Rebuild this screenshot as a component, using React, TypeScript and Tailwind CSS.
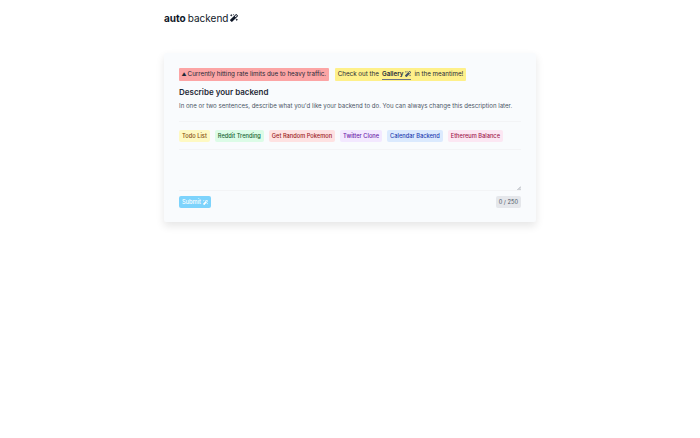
import { FaMagic } from 'react-icons/fa';

const examples = [
  { label: 'Todo List', color: 'bg-[#fef9c3] text-[#854d0e]' },
  { label: 'Reddit Trending', color: 'bg-[#dcfce7] text-[#166534]' },
  { label: 'Get Random Pokemon', color: 'bg-[#fee2e2] text-[#991b1b]' },
  { label: 'Twitter Clone', color: 'bg-[#f3e8ff] text-[#6b21a8]' },
  { label: 'Calendar Backend', color: 'bg-[#dbeafe] text-[#1e40af]' },
  { label: 'Ethereum Balance', color: 'bg-[#fce7f3] text-[#9d174d]' },
];

export default function App() {
  return (
    <div className="min-h-[438px] bg-white font-['Inter',sans-serif] text-gray-900">
      <div className="mx-auto w-[372px]">
        {/* Logo */}
        <div className="flex h-[53px] items-start pt-[11px] text-[10px] leading-[14px]">
          <span className="font-bold">auto</span>
          <span className="ml-[2px]">backend</span>
          <FaMagic className="ml-[2px] mt-[3px] h-[8px] w-[8px]" />
        </div>

        {/* Card */}
        <div className="h-[169px] rounded-[2px] bg-[#f9fbfd] px-[15px] pt-[15px] shadow-[0_4px_8px_rgba(0,0,0,0.1)]">
          <div className="flex gap-[6px] text-[6.25px] leading-[13px] text-[#1f2937]">
            <div className="flex items-center gap-[1px] rounded-[1px] bg-[#fca5a5] px-[2.5px]">
              <span className="text-[5px]">▲</span>
              <span>Currently hitting rate limits due to heavy traffic.</span>
            </div>
            <div className="flex items-center rounded-[1px] bg-[#fef08a] px-[3px]">
              <span>Check out the</span>
              <span className="ml-[3px] flex items-center gap-[2px] border-b border-gray-500 font-semibold leading-[9px]">
                Gallery
                <FaMagic className="h-[6px] w-[6px] text-gray-600" />
              </span>
              <span className="ml-[3px]">in the meantime!</span>
            </div>
          </div>

          <h2 className="mt-[4px] text-[8px] font-semibold leading-[14px] text-[#1f2937]">Describe your backend</h2>
          <p className="mt-[1px] whitespace-nowrap text-[6.1px] leading-[11px] text-gray-600">
            In one or two sentences, describe what you'd like your backend to do. You can always change this description later.
          </p>

          <div className="mt-[10px] flex gap-[5px] border-y border-gray-100 py-[7.5px]">
            {examples.map(ex => (
              <span key={ex.label} className={`rounded-[2px] px-[3px] text-[5.7px] font-medium leading-[12px] ${ex.color}`}>
                {ex.label}
              </span>
            ))}
          </div>

          {/* Textarea, the drag handle sits over its corner */}
          <div className="relative">
            <textarea
              className="block h-[41px] w-full resize-none border-b border-gray-100 bg-transparent outline-none"
              defaultValue=""
            />
            <svg className="absolute bottom-[1px] right-[0px] h-[4px] w-[4px]" viewBox="0 0 4 4">
              <path d="M0.5 4L4 0.5M2.5 4L4 2.5" stroke="#6b7280" strokeWidth="0.6" fill="none" />
            </svg>
          </div>

          <div className="mt-[5px] flex items-center justify-between">
            <button className="flex h-[12px] items-center gap-[2px] rounded-[2px] bg-[#7dd3fc] px-[3px] text-[5.7px] font-medium text-white">
              Submit
              <FaMagic className="h-[5px] w-[5px]" />
            </button>
            <span className="rounded-[2px] bg-gray-200 px-[3px] text-[5.7px] leading-[12px] text-gray-600">0 / 250</span>
          </div>
        </div>
      </div>
    </div>
  );
}
